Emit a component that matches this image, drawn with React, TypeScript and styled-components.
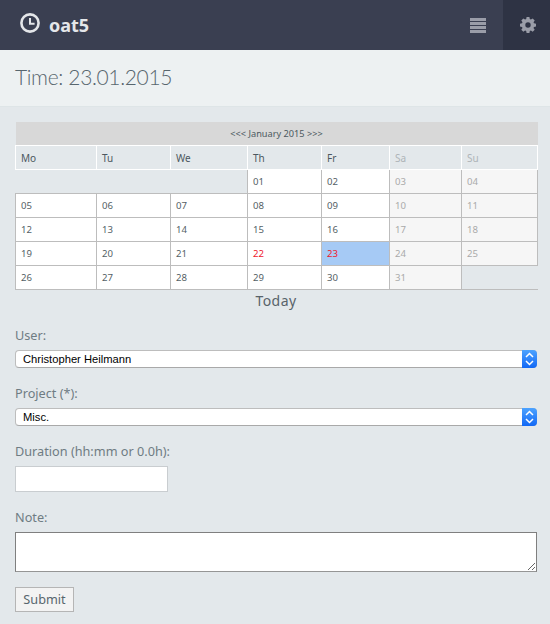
import React from 'react'
import styled, { createGlobalStyle } from 'styled-components'

const Global = createGlobalStyle`
  html, body {
    margin: 0;
    padding: 0;
    background: #e3e8eb;
  }
  body {
    font-family: "Noto Sans", "Open Sans", sans-serif;
    color: #58666e;
  }
`

const Page = styled.div`
  width: 550px;
  height: 624px;
  overflow: hidden;
  background: #e3e8eb;
`

const TopBar = styled.header`
  height: 50px;
  display: flex;
  align-items: stretch;
  background: #3a3f51;
`

const Brand = styled.a`
  display: flex;
  align-items: center;
  gap: 9px;
  padding-left: 20px;
  margin-right: auto;
  color: #e4e6e9;
  font-size: 18px;
  font-weight: 700;

  svg {
    margin-bottom: 4px;
  }
`

const MenuButton = styled.div`
  width: 47px;
  box-sizing: border-box;
  padding-right: 3px;
  display: flex;
  align-items: center;
  justify-content: center;
`

const SettingsButton = styled.div`
  width: 47px;
  box-sizing: border-box;
  padding-left: 3px;
  display: flex;
  align-items: center;
  justify-content: center;
  background: #2e3344;
`

const TitleBar = styled.div`
  height: 57px;
  box-sizing: border-box;
  display: flex;
  align-items: center;
  padding: 0 15px 3px;
  background: #edf1f2;
  border-bottom: 1px solid #dee5e7;
`

const Title = styled.h1`
  margin: 0;
  font-family: "Lato", sans-serif;
  font-size: 21px;
  font-weight: 300;
  letter-spacing: -0.35px;
  color: #58666e;
`

const Content = styled.main`
  padding: 15px 13px 0 15px;
`

const Calendar = styled.table`
  width: 522px;
  table-layout: fixed;
  border-collapse: collapse;
  font-size: 9.6px;
`

const MonthCell = styled.th`
  height: 23px;
  padding: 0;
  background: #d8d8d8;
  font-size: 9.2px;
  font-weight: 400;
  color: #4c5860;
`

const DayHead = styled.th<{ $weekend?: boolean }>`
  height: 23px;
  padding: 0 0 0 5px;
  border: 1px solid #fff;
  text-align: left;
  font-size: 10px;
  font-weight: 400;
  color: ${p => (p.$weekend ? '#aeb4b8' : '#4c5860')};
`

const DayCell = styled.td<{ $weekend?: boolean; $today?: boolean; $holiday?: boolean }>`
  height: 23px;
  padding: 0 0 0 5px;
  border: 1px solid #bdbdbd;
  background: ${p => (p.$today ? '#a6caf5' : p.$weekend ? '#f6f6f6' : '#fff')};
  color: ${p => (p.$holiday || p.$today ? '#ef1a2d' : p.$weekend ? '#aaaaaa' : '#555f66')};
`

const EmptyCell = styled.td`
  height: 23px;
  padding: 0;
  border-bottom: 1px solid #bdbdbd;
`

const TodayLink = styled.div`
  height: 23px;
  text-align: center;
  font-size: 14px;
  line-height: 22px;
  letter-spacing: 0.4px;
  color: #58636a;
`

const Form = styled.form`
  display: flex;
  flex-direction: column;
  align-items: flex-start;
  margin-top: 12px;
`

const Field = styled.div`
  width: 100%;
  margin-bottom: 15px;
`

const Label = styled.label`
  display: block;
  height: 20px;
  margin-bottom: 5px;
  font-size: 12.7px;
  line-height: 20px;
  color: #6f7c83;
`

const SelectWrap = styled.div`
  position: relative;
  width: 522px;
  height: 18px;
`

const Select = styled.select`
  appearance: none;
  display: block;
  width: 100%;
  height: 18px;
  box-sizing: border-box;
  padding: 0 20px 0 7px;
  background: #fff;
  border: 1px solid #bdbdbd;
  border-bottom-color: #a9a9a9;
  border-radius: 4px;
  font-family: "Liberation Sans", Arial, sans-serif;
  font-size: 11.2px;
  color: #000;
`

const SelectArrow = styled.span`
  position: absolute;
  top: 0;
  right: 0;
  width: 15px;
  height: 18px;
  display: flex;
  align-items: center;
  justify-content: center;
  border-radius: 0 4px 4px 0;
  background: linear-gradient(#4da3ff, #1268f5);
  pointer-events: none;
`

const TextInput = styled.input`
  display: block;
  width: 153px;
  height: 26px;
  box-sizing: border-box;
  padding: 0;
  background: #fff;
  border: 1px solid #c9cdd0;
`

const NoteArea = styled.textarea`
  display: block;
  width: 522px;
  height: 40px;
  box-sizing: border-box;
  padding: 0;
  background: #fff;
  border: 1px solid #7f7f7f;
  border-bottom-color: #959595;
  border-radius: 0;
`

const Submit = styled.button`
  width: 59px;
  height: 25px;
  padding: 0 0 2px;
  background: #f3f3f3;
  border: 1px solid #b5b5b5;
  font-family: "Noto Sans", sans-serif;
  font-size: 12.7px;
  line-height: 20px;
  color: #58666e;
`

const ClockIcon = () => (
  <svg width="20" height="20" viewBox="0 0 20 20" fill="none" stroke="#e4e6e9" strokeWidth="2.6">
    <circle cx="10" cy="10" r="8.6" />
    <path d="M10 5v5.8h4.6" strokeWidth="2" />
  </svg>
)

const BarsIcon = () => (
  <svg width="16" height="15" viewBox="0 0 16 15" fill="#9a9da8">
    <rect y="0" width="16" height="3" />
    <rect y="4" width="16" height="3" />
    <rect y="8" width="16" height="3" />
    <rect y="12" width="16" height="3" />
  </svg>
)

const CogIcon = () => (
  <svg width="16" height="16" viewBox="0 0 16 16" fill="#9a9da8">
    <path
      fillRule="evenodd"
      d="M6.6 0h2.8l.4 2.1 1.1.5 1.8-1.2 2 2-1.2 1.8.5 1.1 2 .4v2.8l-2 .4-.5 1.1 1.2 1.8-2 2-1.8-1.2-1.1.5-.4 2H6.6l-.4-2-1.1-.5-1.8 1.2-2-2 1.2-1.8-.5-1.1-2-.4V6.7l2-.4.5-1.1-1.2-1.8 2-2 1.8 1.2 1.1-.5zM8 5.3a2.7 2.7 0 1 0 0 5.4 2.7 2.7 0 0 0 0-5.4z"
    />
  </svg>
)

const UpDownIcon = () => (
  <svg width="9" height="14" viewBox="0 0 9 14" fill="none" stroke="#fff" strokeWidth="1.5">
    <path d="M1 5l3.5-3.5L8 5M1 9l3.5 3.5L8 9" />
  </svg>
)

const columns = [81, 74, 77, 74, 68, 72, 76]
const dayNames = ['Mo', 'Tu', 'We', 'Th', 'Fr', 'Sa', 'Su']
const weeks = [
  ['05', '06', '07', '08', '09', '10', '11'],
  ['12', '13', '14', '15', '16', '17', '18'],
  ['19', '20', '21', '22', '23', '24', '25'],
]

export default function App() {
  return (
    <Page>
      <Global />
      <TopBar>
        <Brand>
          <ClockIcon />
          oat5
        </Brand>
        <MenuButton>
          <BarsIcon />
        </MenuButton>
        <SettingsButton>
          <CogIcon />
        </SettingsButton>
      </TopBar>
      <TitleBar>
        <Title>Time: 23.01.2015</Title>
      </TitleBar>
      <Content>
        <Calendar>
          <colgroup>
            {columns.map((w, i) => (
              <col key={i} style={{ width: w }} />
            ))}
          </colgroup>
          <thead>
            <tr>
              <MonthCell colSpan={7}>&lt;&lt;&lt; January 2015 &gt;&gt;&gt;</MonthCell>
            </tr>
            <tr>
              {dayNames.map((d, i) => (
                <DayHead key={d} $weekend={i > 4}>{d}</DayHead>
              ))}
            </tr>
          </thead>
          <tbody>
            <tr>
              <EmptyCell colSpan={3} />
              <DayCell>01</DayCell>
              <DayCell>02</DayCell>
              <DayCell $weekend>03</DayCell>
              <DayCell $weekend>04</DayCell>
            </tr>
            {weeks.map(week => (
              <tr key={week[0]}>
                {week.map((d, i) => (
                  <DayCell key={d} $weekend={i > 4} $holiday={d === '22'} $today={d === '23'}>{d}</DayCell>
                ))}
              </tr>
            ))}
            <tr>
              <DayCell>26</DayCell>
              <DayCell>27</DayCell>
              <DayCell>28</DayCell>
              <DayCell>29</DayCell>
              <DayCell>30</DayCell>
              <DayCell $weekend>31</DayCell>
              <EmptyCell />
            </tr>
          </tbody>
        </Calendar>
        <TodayLink>Today</TodayLink>
        <Form>
          <Field>
            <Label>User:</Label>
            <SelectWrap>
              <Select defaultValue="ch">
                <option value="ch">Christopher Heilmann</option>
              </Select>
              <SelectArrow><UpDownIcon /></SelectArrow>
            </SelectWrap>
          </Field>
          <Field>
            <Label>Project (*):</Label>
            <SelectWrap>
              <Select defaultValue="misc">
                <option value="misc">Misc.</option>
              </Select>
              <SelectArrow><UpDownIcon /></SelectArrow>
            </SelectWrap>
          </Field>
          <Field>
            <Label>Duration (hh:mm or 0.0h):</Label>
            <TextInput type="text" />
          </Field>
          <Field>
            <Label>Note:</Label>
            <NoteArea />
          </Field>
          <Submit type="button">Submit</Submit>
        </Form>
      </Content>
    </Page>
  )
}
